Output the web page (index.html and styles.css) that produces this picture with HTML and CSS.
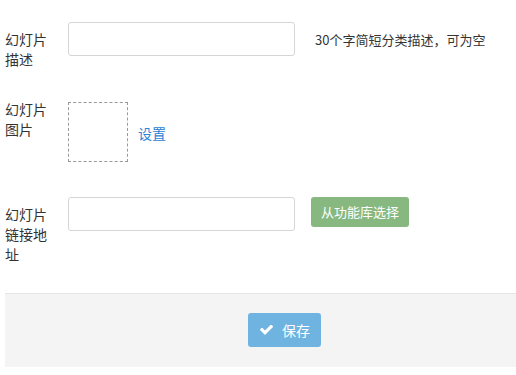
FILE: index.html
```html
<!DOCTYPE html>
<html lang="zh-CN">
<head>
<meta charset="utf-8">
<title>幻灯片</title>
<link rel="stylesheet" href="styles.css">
</head>
<body>
<form class="form">
  <div class="row row-desc">
    <label class="lbl">幻灯片描述</label>
    <input class="field" type="text">
    <span class="hint">30个字简短分类描述，可为空</span>
  </div>
  <div class="row row-pic">
    <label class="lbl">幻灯片图片</label>
    <div class="pic-wrap">
      <div class="pic"></div>
      <a class="link" href="#">设置</a>
    </div>
  </div>
  <div class="row row-url">
    <label class="lbl">幻灯片链接地址</label>
    <input class="field" type="text">
    <button class="btn-green" type="button">从功能库选择</button>
  </div>
  <div class="actions">
    <button class="btn-save" type="button">
      <svg class="check" viewBox="121 402 1550 1120" width="13" height="10" aria-hidden="true"><path fill="#fff" d="M1671 566q0 40-28 68l-724 724-136 136q-28 28-68 28t-68-28l-136-136-362-362q-28-28-28-68t28-68l136-136q28-28 68-28t68 28l294 295 656-657q28-28 68-28t68 28l136 136q28 28 28 68z"/></svg>
      <span>保存</span>
    </button>
  </div>
</form>
</body>
</html>
```
FILE: styles.css
```css
html, body {
  margin: 0;
  padding: 0;
  background: #fff;
}
body {
  font-family: "Noto Sans CJK SC", "Noto Sans", sans-serif;
  color: #393939;
  font-size: 13px;
}
.form {
  margin: 0;
}
.row {
  display: flex;
  align-items: flex-start;
  padding-left: 5px;
}
.row-desc { margin-top: 22px; }
.row-pic { margin-top: 23px; }
.row-url { margin-top: 35px; }
.lbl {
  width: 43px;
  margin-right: 20px;
  padding-top: 7px;
  font-size: 14px;
  line-height: 20px;
  color: #333;
}
.field {
  box-sizing: border-box;
  width: 227px;
  height: 34px;
  margin: 0;
  border: 1px solid #d5d5d5;
  border-radius: 3px;
  background: #fff;
  padding: 5px 8px;
  font: inherit;
  outline: none;
}
.hint {
  margin-left: 20px;
  font-size: 13px;
  line-height: 34px;
  padding-top: 1px;
  color: #333;
}
.pic-wrap {
  display: flex;
  align-items: center;
  margin-top: 10px;
}
.pic {
  box-sizing: border-box;
  width: 60px;
  height: 60px;
  border: 1px dashed #999;
}
.link {
  margin-left: 10px;
  font-size: 14px;
  line-height: 20px;
  color: #2a83d4;
  text-decoration: none;
  padding-top: 2px;
}
.btn-green {
  box-sizing: border-box;
  width: 98px;
  height: 30px;
  margin-left: 16px;
  padding: 0;
  border: none;
  border-radius: 3px;
  background: #87b87f;
  color: #fff;
  font-family: inherit;
  font-size: 13px;
  line-height: 30px;
  cursor: pointer;
}
.actions {
  margin: 29px 0 0 5px;
  padding: 19px 0 20px 243px;
  border-top: 1px solid #e5e5e5;
  background: #f4f4f4;
}
.btn-save {
  box-sizing: border-box;
  display: flex;
  align-items: center;
  width: 73px;
  height: 34px;
  padding: 0 0 0 12px;
  border: none;
  border-radius: 3px;
  background: #6fb3e0;
  color: #fff;
  font-family: inherit;
  font-size: 14px;
  cursor: pointer;
}
.check {
  display: block;
  margin-right: 9px;
}
```
